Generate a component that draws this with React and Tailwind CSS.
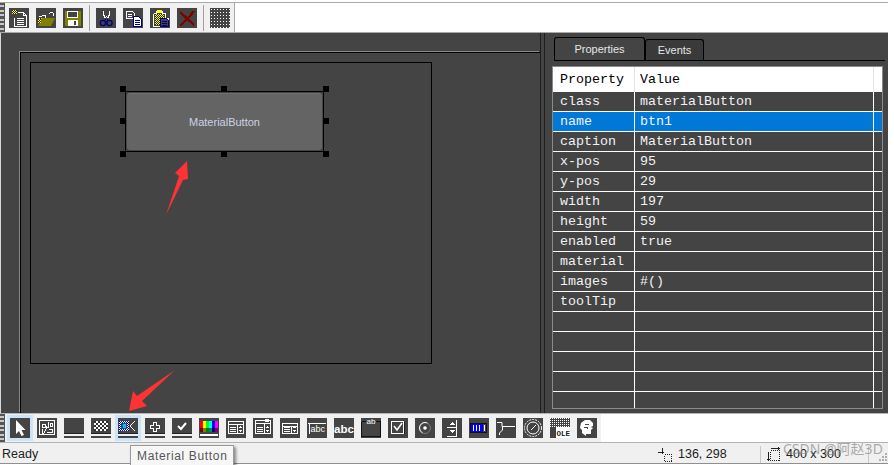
const W = "#ffffff";
const NAVY = "#000080";
const OLIVE = "#808000";
const YEL = "#ffff00";

// every toolbar icon is a 20x20 dark tile with hard pixel edges
function Tile({ children, clear }) {
  return (
    <svg
      width="20"
      height="20"
      viewBox="0 0 20 20"
      shapeRendering="crispEdges"
      className={clear ? "block" : "block bg-[#444444]"}
    >
      {children}
    </svg>
  );
}

function Lines({ x, y, w, n, gap = 2, color = W }) {
  return Array.from({ length: n }).map((_, i) => (
    <rect key={i} x={x} y={y + i * gap} width={w} height="1" fill={color} />
  ));
}

function Dither({ x, y, w, h, a = YEL, b = "#222222", s = 1 }) {
  const out = [];
  for (let r = 0; r < h; r++) {
    for (let c = 0; c < w; c++) {
      out.push(
        <rect key={r + "-" + c} x={x + c * s} y={y + r * s} width={s} height={s} fill={(r + c) % 2 ? a : b} />
      );
    }
  }
  return out;
}

const topIcons = [
  [
    <Tile key="new">
      <Dither x={3} y={2} w={5} h={4} />
      <path d="M8.5 4.5h6l3 3v11h-12v-9" fill="none" stroke={W} />
      <path d="M14.5 4.5v3h3" fill="none" stroke={W} />
      <Lines x={8} y={10} w={7} n={4} />
    </Tile>,
    <Tile key="open">
      <path d="M12.5 6.5l2-2h2l2 2M17 5v3" fill="none" stroke={W} />
      <path d="M2.5 8.5h3l1 -1h3v2" fill="none" stroke={W} />
      <Dither x={2} y={10} w={7} h={4} />
      <path d="M2 18l4-8h13l-4 8z" fill={OLIVE} shapeRendering="auto" />
      <Dither x={2} y={11} w={3} h={4} />
    </Tile>,
    <Tile key="save">
      <rect x="2" y="3" width="16" height="15" fill={OLIVE} />
      <rect x="4" y="3" width="11" height="7" fill="#444444" />
      <rect x="4" y="3" width="11" height="1" fill={W} />
      <rect x="14" y="4" width="1" height="6" fill={W} />
      <rect x="4" y="4" width="1" height="6" fill={W} />
      <rect x="4" y="9" width="11" height="1" fill={W} />
      <rect x="5" y="12" width="10" height="6" fill={W} />
      <rect x="11" y="13" width="2" height="4" fill="#444444" />
    </Tile>,
  ],
  [
    <Tile key="cut">
      <path d="M7.5 2.5v4l2 4M13.5 2.5v4l-2 4" fill="none" stroke={W} />
      <rect x="10" y="8" width="1" height="1" fill={W} />
      <circle cx="7" cy="15" r="2.6" fill="none" stroke={NAVY} strokeWidth="1.4" shapeRendering="auto" />
      <circle cx="13.5" cy="15" r="2.6" fill="none" stroke={NAVY} strokeWidth="1.4" shapeRendering="auto" />
      <path d="M9.5 11l-1 2M11 11l1 2" stroke={NAVY} fill="none" />
    </Tile>,
    <Tile key="copy">
      <path d="M3.5 3.5h6l2 2v5h-8z" fill="#444444" stroke={W} />
      <Lines x={5} y={6} w={4} n={3} />
      <path d="M10.5 8.5h5l3 3v7h-8z" fill={W} stroke={NAVY} strokeWidth="1.4" />
      <Lines x={12} y={12} w={5} n={3} color={NAVY} />
    </Tile>,
    <Tile key="paste">
      <rect x="4" y="4" width="11" height="14" fill="#444444" />
      <Dither x={5} y={6} w={9} h={11} />
      <path d="M3.5 5.5h3v-2h6v2h3v5M3.5 5.5v13h7" fill="none" stroke={W} />
      <rect x="7" y="2" width="5" height="3" fill={YEL} />
      <rect x="10" y="10" width="9" height="9" fill={W} />
      <path d="M10.5 10.5h6l2 2v6h-8z" fill="#444444" stroke={NAVY} strokeWidth="1.4" />
      <Lines x={12} y={13} w={5} n={3} color={NAVY} />
    </Tile>,
    <Tile key="del">
      <path d="M3 4l14 13M17 3l-5 6-3 3-6 6" fill="none" stroke="#7f0000" strokeWidth="2.4" />
    </Tile>,
  ],
  [
    <Tile key="grid">
      {Array.from({ length: 49 }).map((_, i) => (
        <rect key={i} x={1 + (i % 7) * 3} y={1 + Math.floor(i / 7) * 3} width="1" height="1" fill={W} />
      ))}
    </Tile>,
  ],
];

function BandIcon({ children }) {
  return (
    <Tile clear>
      <rect x="0" y="0" width="20" height="16" fill="#444444" />
      <rect x="0" y="18" width="20" height="2" fill="#444444" />
      <rect x="0" y="15" width="20" height="1" fill="#222222" />
      {children}
    </Tile>
  );
}

const Form = ({ top = 3, right = false }) => (
  <>
    <rect x="2" y={top} width="16" height="1" fill={W} />
    <rect x="2" y={top} width="1" height={16 - top} fill={W} />
    <rect x="17" y={top} width="1" height={16 - top} fill={W} />
    <rect x="2" y="15" width="16" height="1" fill={W} />
    <rect x="2" y={top + 3} width="16" height="1" fill={W} />
    <Lines x={4} y={9} w={6} n={3} />
    <rect x="11" y={top + 3} width="1" height={12 - top} fill={W} />
    <path d="M13 10h3l-1.5-2zM13 12h3l-1.5 2z" fill={W} />
    {right && <rect x="12" y="1" width="4" height="3" fill={W} />}
  </>
);

const bottomIcons = [
  <Tile key="pointer"><path d="M6 2v14l3-3 2.500 5 2.500-1-2.500-5h4z" fill={W} shapeRendering="auto" /></Tile>,
  <Tile key="image">
    <rect x="2.500" y="2.500" width="15" height="14" fill="none" stroke={W} />
    <path d="M5 6h3v3h-3zM5 11v4h2l2-4v-3M11 4v5h-1M13 5h2v3h-2zM10 14h5v-3h-3" fill="none" stroke={W} />
  </Tile>,
  <BandIcon key="rect" />,
  <BandIcon key="checker"><Dither x={3} y={3} w={7} h={5} a={W} b="#333333" s={2} /></BandIcon>,
  <BandIcon key="mat">
    <Dither x={1} y={3} w={10} h={10} a="#ffffff" b="#0000a0" />
    <rect x="3" y="5" width="6" height="6" fill="#0050e0" />
    <rect x="5" y="6" width="3" height="4" fill="#20c0a0" />
    <path d="M17 3l-5 5 5 5" fill="none" stroke={W} />
  </BandIcon>,
  <BandIcon key="plus">
    <path d="M8.500 4.500h3v3h3v3h-3v3h-3v-3h-3v-3h3z" fill="#444444" stroke={W} />
  </BandIcon>,
  <BandIcon key="check">
    <path d="M6 8l3 3 5-6" fill="none" stroke={W} strokeWidth="2" shapeRendering="auto" />
  </BandIcon>,
  <Tile key="colors">
    {["#ff0000", "#ffff00", "#00ff00", "#00ffff", "#0000ff", "#ff00ff"].map((c, i) => (
      <g key={c}>
        <rect x={1 + i * 3} y="3" width="3" height="7" fill={c} />
        <rect x={1 + i * 3} y="10" width="3" height="4" fill={["#800000", "#808000", "#008000", "#008080", "#000080", "#800080"][i]} />
      </g>
    ))}
    <rect x="1" y="16" width="18" height="2" fill={W} />
  </Tile>,
  <Tile key="form1"><Form /></Tile>,
  <Tile key="form2"><Form top={2} right /></Tile>,
  <Tile key="form3"><Form top={5} /></Tile>,
  <Tile key="label">
    <rect x="1" y="5" width="18" height="1" fill={W} />
    <rect x="2" y="5" width="1" height="11" fill={W} />
    <text x="3.500" y="14" fontSize="9" fill={W} fontFamily="Liberation Sans, sans-serif">abc</text>
  </Tile>,
  <Tile key="bold">
    <text x="0" y="15" fontSize="11.500" fontWeight="700" fill={W} fontFamily="Liberation Sans, sans-serif">abc</text>
  </Tile>,
  <Tile key="group" clear>
    <rect x="0" y="0" width="20" height="20" fill="#444444" />
    <path d="M.5 3.500h4M15 3.500h4.500v15h-19v-15" fill="none" stroke="#111111" />
    <text x="5.500" y="6" fontSize="8" fill={W} fontFamily="Liberation Sans, sans-serif">ab</text>
  </Tile>,
  <Tile key="checkbox">
    <rect x="3.500" y="3.500" width="12" height="12" fill="none" stroke={W} />
    <path d="M6 8l3 4 5-7" fill="none" stroke={W} strokeWidth="1.600" shapeRendering="auto" />
    <rect x="16" y="4" width="1" height="12" fill="#222222" />
  </Tile>,
  <Tile key="radio">
    <circle cx="10" cy="10" r="5.500" fill="none" stroke="#7a7a7a" shapeRendering="auto" />
    <path d="M12.500 5.100a5.500 5.500 0 0 0 -2.500 -0.600a5.500 5.500 0 0 0 -5.500 5.500a5.500 5.500 0 0 0 3 4.900" fill="none" stroke={W} shapeRendering="auto" />
    <circle cx="10" cy="10" r="1.800" fill={W} shapeRendering="auto" />
  </Tile>,
  <Tile key="spin">
    <path d="M14.500 2v16h-10" fill="none" stroke={W} />
    <path d="M7 7h6l-3-3zM7 12h6l-3 3z" fill={W} />
    <rect x="5" y="9" width="9" height="1" fill={W} />
  </Tile>,
  <Tile key="progress">
    <rect x="1" y="5" width="13" height="10" fill="#0000ff" />
    <rect x="1.500" y="5.500" width="16" height="9" fill="none" stroke="#111111" />
    <rect x="4" y="7" width="1" height="6" fill={W} />
    <rect x="7" y="7" width="1" height="6" fill={W} />
    <rect x="10" y="7" width="1" height="6" fill={W} />
    <rect x="15" y="7" width="1" height="6" fill={W} />
  </Tile>,
  <Tile key="tree">
    <path d="M1 4.500h5v4M6 8.500h13M6.500 9v3l-3 3v2" fill="none" stroke={W} shapeRendering="auto" />
  </Tile>,
  <Tile key="dial">
    <circle cx="10" cy="10" r="8.500" fill="none" stroke={W} strokeDasharray="2 1" shapeRendering="auto" />
    <circle cx="10" cy="10" r="6" fill="none" stroke={W} shapeRendering="auto" />
    <path d="M8 12l5-5" stroke={W} fill="none" shapeRendering="auto" />
  </Tile>,
  <Tile key="ole">
    {Array.from({ length: 50 }).map((_, i) => (
      <rect key={i} x={(i % 10) * 2} y={Math.floor(i / 10) * 2} width="1" height="1" fill={W} />
    ))}
    <rect x="6" y="9" width="14" height="11" fill={W} />
    <text x="6.500" y="18" fontSize="7.500" fontWeight="700" fill="#222222" fontFamily="Liberation Mono, monospace">OLE</text>
  </Tile>,
  <Tile key="head">
    <path d="M5 15v-3l-2-2 1-5 4-3h5l3 3v3l-2 1 2 1-2 2v4h-5v2" fill={W} shapeRendering="auto" />
    <path d="M8 6h4M7 9h3v2" fill="none" stroke="#444444" />
  </Tile>,
];

const rows = [
  ["class", "materialButton"],
  ["name", "btn1"],
  ["caption", "MaterialButton"],
  ["x-pos", "95"],
  ["y-pos", "29"],
  ["width", "197"],
  ["height", "59"],
  ["enabled", "true"],
  ["material", ""],
  ["images", "#()"],
  ["toolTip", ""],
  ["", ""],
  ["", ""],
  ["", ""],
  ["", ""],
  ["", ""],
];

const handles = [
  "left-[89px] top-[23px]",
  "left-[190px] top-[23px]",
  "left-[292px] top-[23px]",
  "left-[89px] top-[55px]",
  "left-[292px] top-[55px]",
  "left-[89px] top-[88px]",
  "left-[190px] top-[88px]",
  "left-[292px] top-[88px]",
];

function Grip() {
  return (
    <div className="w-[5px] h-full flex flex-col justify-between py-[2px] bg-[#555555] shrink-0">
      {Array.from({ length: 6 }).map((_, i) => (
        <div key={i} className="w-[4px] h-[2px] bg-[#c8c8c8]" />
      ))}
    </div>
  );
}

function PropertyTable() {
  return (
    <div className="ml-[7px] w-[331px] h-[343px] overflow-hidden border border-[#8a8a8a] font-['Liberation_Mono',monospace] text-[13.33px] leading-[19px]">
      <div className="flex h-[25px] bg-white text-black items-center">
        <div className="w-[82px] pl-[7px] border-r border-[#e4e4e4] h-full flex items-center">Property</div>
        <div className="w-[239px] pl-[5px] border-r border-[#e4e4e4] h-full flex items-center">Value</div>
      </div>
      {rows.map((r, i) => (
        <div
          key={i}
          className={`flex h-[20px] border-b border-white text-[#f2f2f2] ${r[0] === "name" ? "bg-[#0078d7]" : ""}`}
        >
          <div className="w-[82px] pl-[7px] border-r border-white">{r[0]}</div>
          <div className="w-[239px] pl-[5px] border-r border-white">{r[1]}</div>
        </div>
      ))}
    </div>
  );
}

export default function App() {
  return (
    <div className="relative w-[894px] h-[465px] overflow-hidden bg-white font-['Liberation_Sans',sans-serif]">
      <div className="w-[888px] h-[464px] flex flex-col">
        {/* top toolbar */}
        <div className="mt-[2px] h-[31px] shrink-0 border-y border-[#a9a9a9] flex bg-white">
          <div className="w-[235px] h-full flex items-center bg-[#f0f0f0] border-r border-[#a9a9a9]">
            <Grip />
            <div className="flex items-center ml-[4px]">
              {topIcons.map((group, g) => (
                <div key={g} className="flex items-center">
                  {g > 0 && <div className="w-px h-[26px] bg-[#a0a0a0] mx-[6px]" />}
                  <div className="flex gap-[7px]">{group}</div>
                </div>
              ))}
            </div>
          </div>
        </div>

        {/* design area + property panel */}
        <div className="flex-1 min-h-0 flex bg-[#444444] border-l border-[#d8d8d8]">
          <div className="w-[539px] shrink-0 pl-[19px] pt-[19px] h-full">
            <div className="h-full border-l border-t border-l-black border-t-black shadow-[-1px_-1px_0_#8a8a8a] pl-[9px] pt-[9px]">
              <div className="relative w-[402px] h-[302px] border border-black">
                <div className="absolute left-[94px] top-[28px] w-[199px] h-[61px] border border-black p-px">
                  <div className="w-full h-full rounded-[3px] bg-[#646464] border-t border-[#707070] flex items-center justify-center text-[11px] text-[#cdd2e4]">
                    MaterialButton
                  </div>
                </div>
                {handles.map((h) => (
                  <div key={h} className={`absolute w-[6px] h-[6px] bg-black ${h}`} />
                ))}
              </div>
            </div>
          </div>
          <div className="w-[5px] shrink-0 border-x border-[#1f1f1f]" />
          <div className="flex-1 min-w-0 flex flex-col pr-[3px]">
            <div className="mt-[5px] ml-[9px] h-[23px] flex items-end border-b border-black text-[11px]">
              <div className="w-[91px] h-[23px] pt-px border border-b-0 border-black rounded-t-[3px] flex items-center justify-center text-[#e6e6e6]">
                Properties
              </div>
              <div className="w-[59px] h-[21px] border border-b-0 border-black rounded-t-[3px] bg-[#3a3a3a] flex items-center justify-center text-[#e6e6e6]">
                Events
              </div>
            </div>
            <div className="mt-[5px]">
              <PropertyTable />
            </div>
          </div>
        </div>

        {/* control palette */}
        <div className="h-[30px] shrink-0 flex border-y border-[#b4b4b4] bg-white">
          <div className="h-full flex items-center bg-[#f0f0f0] w-[601px] shrink-0">
            <Grip />
            <div className="flex items-center ml-[5px] gap-[7px]">
              {bottomIcons.map((icon, i) => (
                <div
                  key={i}
                  className={i === 0 || i === 4 ? "outline-[3px] outline-[#cce4f7] bg-[#e5f1fb]" : ""}
                >
                  {icon}
                </div>
              ))}
            </div>
          </div>
        </div>

        {/* status bar */}
        <div className="h-[21px] shrink-0 flex items-center pt-[3px] bg-[#f0f0f0] border-b border-[#8f8f8f] text-[12.5px] text-[#222222]">
          <div className="w-[658px] pl-[2px]">Ready</div>
          <div className="w-[102px] h-full flex items-center gap-[6px]">
            <svg width="14" height="14" viewBox="0 0 14 14" shapeRendering="crispEdges">
              <path d="M0 4.500h6M4.500 0v6" stroke="#222" fill="none" />
              <path d="M6.500 6.500h7v7h-7z" stroke="#222" strokeDasharray="1 1" fill="none" />
            </svg>
            <span>136, 298</span>
          </div>
          <div className="w-[108px] h-full flex items-center gap-[5px] pl-[5px] border-l border-[#c8c8c8]">
            <svg width="15" height="15" viewBox="0 0 15 15" shapeRendering="crispEdges">
              <path d="M5 1.500h9M12 0v3M2.500 5v9M1 12h3" stroke="#222" fill="none" />
              <path d="M4.500 3.500h9v10h-9z" stroke="#222" strokeDasharray="1 1" fill="none" />
            </svg>
            <span>400 x 300</span>
          </div>
          <div className="h-full flex-1 border-l border-[#c8c8c8] flex items-end justify-end pb-[1px]">
            <svg width="10" height="10" viewBox="0 0 10 10" shapeRendering="crispEdges">
              <path d="M7 1h2v2h-2zM4 4h2v2h-2zM7 4h2v2h-2zM1 7h2v2h-2zM4 7h2v2h-2zM7 7h2v2h-2z" fill="#b0b0b0" />
            </svg>
          </div>
        </div>
      </div>

      {/* annotations drawn over the screenshot */}
      <svg className="absolute left-0 top-0 pointer-events-none" width="894" height="465">
        <path d="M187 161L175 173L179 176L166 215L183 180L188 179Z" fill="#ff3333" />
        <path d="M129 411L147 406L142 401L175 370L137 396L133 391Z" fill="#ff3333" />
      </svg>

      <div className="absolute left-[130px] top-[445px] w-[104px] h-[21px] bg-[#f6f6f6] border border-[#9a9a9a] shadow-[2px_2px_3px_rgba(0,0,0,0.45)] flex items-center pl-[6px] text-[12px] tracking-[0.65px] text-[#575757]">
        Material Button
      </div>

      <div className="absolute left-[783px] top-[440px] text-[14px] leading-[18px] text-[#8a8a8a]/70 font-['Noto_Sans','Noto_Sans_CJK_SC',sans-serif] whitespace-nowrap">
        CSDN @阿赵3D
      </div>
    </div>
  );
}
